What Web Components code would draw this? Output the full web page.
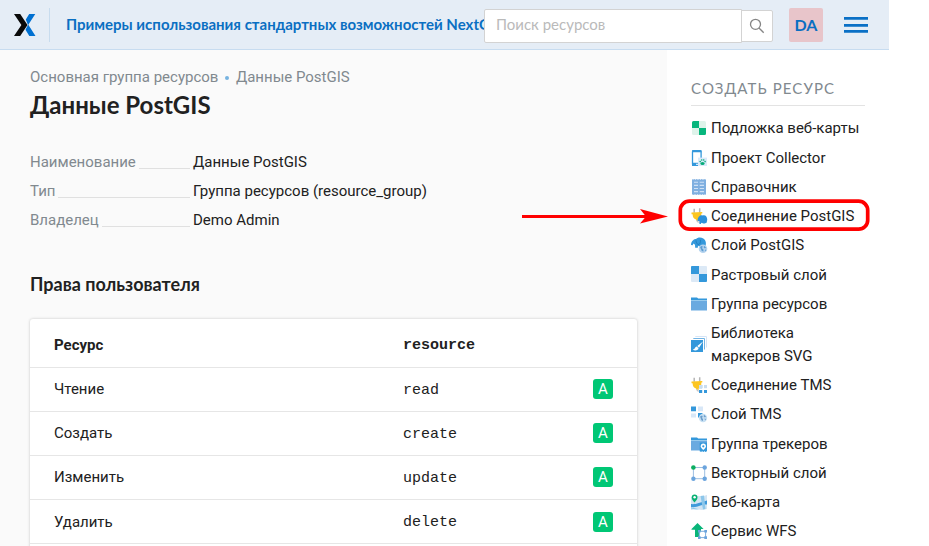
<!DOCTYPE html>
<html lang="ru">
<head>
<meta charset="utf-8">
<title>Данные PostGIS</title>
<style>
html,body{margin:0;height:546px;overflow:hidden;background:#fff}
body{font-family:Roboto,"Liberation Sans",sans-serif;font-size:15px;color:#212121}
</style>
</head>
<body>
<app-page></app-page>

<script>
const define = (name, html, setup) => customElements.define(name, class extends HTMLElement {
  constructor() {
    super();
    this.attachShadow({ mode: 'open' }).innerHTML = html;
  }
  connectedCallback() { if (setup) setup(this, this.shadowRoot); }
});

const plug = '<path d="M3.2.8v4M8.7.3v4.4" stroke="#b5b5b5" stroke-width="1.5"/><path d="M.5 4.600l10.800-.7v1.500l-1 .2c.3 2.600-.7 5-2.600 5.600l.3 1.600-2.700-.2-.3-1.200C2.700 11 1.700 9 1.600 6.300L.500 6.200z" fill="#fcc521"/><path d="M5.800 12l.6 1.800 3 .3" fill="none" stroke="#bbb" stroke-width="1.100"/>';
const elephant = '<path d="M0 8C.2 3.800 3 2 5.200 2 6.300.3 10 0 12.300 1.500c2.800 1.600 3 5 2.200 7.500l-1 2-2-.3-1-2-2.200.8-1.300-.8-.2 2H4.200L4 7.700 2.500 6.600 1.600 8.300z" fill="#3498db"/><path d="M5 3.300c.1 2.200.9 3.500 2 4.300 1.900-.1 2.700-1.900 2.400-4.800" fill="none" stroke="#1b75b5" stroke-width=".7"/>';
const icons = {
  basemap: '<rect x="1" y="1" width="14" height="14" rx="1.500" fill="#def3ea"/><path d="M2.500 1H8v7H1V2.500Q1 1 2.500 1zM8 8h7v5.500Q15 15 13.500 15H8z" fill="#07b67d"/>',
  collector: '<rect x="1.500" y=".7" width="8.600" height="14.500" rx="1" fill="#fff" stroke="#3498db" stroke-width="1.300"/><path d="M1 .2h9.500v2H1zM1 12.700h9.500V16H1z" fill="#3498db"/><path d="M5 14.300h2" stroke="#fff"/><rect x="7" y="7.600" width="9" height="8.400" fill="#dbeafa"/><ellipse cx="11.500" cy="13.400" rx="2.100" ry="1.500" fill="#08ac79"/><circle cx="9.200" cy="11.600" r=".8" fill="#08ac79"/><circle cx="10.700" cy="10" r=".8" fill="#08ac79"/><circle cx="12.700" cy="10" r=".8" fill="#08ac79"/><circle cx="14.100" cy="11.600" r=".8" fill="#08ac79"/>',
  lookup: '<path d="M1 0l1 .8L3.200 0l1.300.8L5.700 0 7 .8 8.200 0l1.300.8 1.200-.8 1.300.8 1.200-.8 1 .8.800-.8v16l-1-.8-1.200.8-1.300-.8-1.200.8-1.300-.8-1.200.8-1.300-.8-1.200.8-1.300-.8-1.200.8-1.200-.8L1 16z" fill="#7fafe0"/><path d="M3 3.300h4M3 6.400h4M3 9.500h4M3 12.600h4M8.700 3.300H13M8.700 6.400H13M8.700 9.500H13M8.700 12.600H13" stroke="#cfe1f6" stroke-width="1.100"/>',
  pgconn: plug + '<g transform="translate(6.500 6.800) scale(.65 .62)"><path d="M0 10C0 3 4 0 8 1c4-1.500 7 2 7 7l-1 5-3 1-2 0-3-1-1 2H3l0-5z" fill="#2d91db"/></g>',
  pglayer: elephant + '<circle cx="12" cy="11.700" r="4.300" fill="#b5d3ee"/><path d="M9 10l2-1.300.7 1-.7 1.600 1.300 1 .2 2.200-1.700-.6-.8-1.700zM13 8.700l2 1.800-1 1-1.300-1zM14 12.500l1.200.5-1.300 1.500z" fill="#5b9cd2"/>',
  raster: '<rect width="16" height="16" rx="1" fill="#dce9f6"/><path d="M1 0h7v8H0V1q0-1 1-1zM8 8h8v7q0 1-1 1H8z" fill="#3498db"/>',
  folder: '<path d="M0 1.500h6l1.200 1H16v2H0z" fill="#3498db"/><path d="M0 5h16v9.500H0z" fill="#6aaae0"/>',
  svg: '<path d="M4.300.5h11.200v11" fill="none" stroke="#d6e5f6" stroke-width="1"/><path d="M2.300 2.500h11.200v11" fill="none" stroke="#72b4e5"/><rect y="4" width="12" height="12" fill="#3498db"/><path d="M12 5.500L6.300 10 8 11.700zM5.800 10.500c-2 .2-1.500 2.500-4 3.200 2.300 1.500 5.800.5 5.700-1.500z" fill="#fff"/>',
  tmsconn: plug + '<path d="M8 8h3.200v3.200H8zM13 13h3v3h-3z" fill="#3498db"/><path d="M13 8h3v3.200h-3z" fill="#c8dcef"/><path d="M8 13h3.200v3H8z" fill="#3498db"/><path d="M8 8h3.200v3.200H8z" fill="#c8dcef"/>',
  tmslayer: '<path d="M0 .5h5v4.800H0zM7 7h4.500v4.500H7z" fill="#3498db"/><path d="M7 .5h5v4.800H7zM0 7.500h5v4H0z" fill="#d8e7f7"/><circle cx="12" cy="12" r="4.200" fill="#c6dff2"/><path d="M9 10.500l2-1 .7 1-.7 1.500 1 1v2l-1.600-.8-.6-1.600zM13 8.700l2 1.800-1 1-1.300-1zM13.500 12.500l1.600.5-1 1.500z" fill="#6c9dcb"/>',
  tracker: '<path d="M0 1.500h6l1.200 1H16v2H0z" fill="#3498db"/><path d="M0 5h16v9.500H0z" fill="#6aaae0"/><rect x="8.700" y="6.500" width="7.300" height="8.800" fill="#3498db"/><path d="M10 16v-1.500m2.300 1.500v-1.500M14.700 16v-1.500" stroke="#3498db"/><path d="M12.300 13.900c-1.700-1.500-2.600-2.300-2.600-3.700a2.600 2.600 0 015.200 0c0 1.400-.9 2.200-2.600 3.700z" fill="#fff"/><circle cx="12.300" cy="10.300" r="1.100" fill="#3498db"/>',
  vector: '<path d="M2.400 2.500h11.300v11.200H2.400z" fill="none" stroke="#9dbfe2"/><circle cx="2.400" cy="2.500" r="2.300" fill="#0cae61"/><circle cx="13.700" cy="2.500" r="2.200" fill="#6ba4dd"/><circle cx="2.400" cy="13.700" r="2.200" fill="#6ba4dd"/><circle cx="13.700" cy="13.700" r="2.200" fill="#6ba4dd"/>',
  webmap: '<path d="M0 3l5-1.500 6 1L16 1v14l-5 1-6-1-5 1z" fill="#d3e4f2"/><path d="M0 10c4 .7 8-1 16-3.500v4c-6-.5-9 3.500-16 2.500z" fill="#3f9adb"/><path d="M9.500 2l3.500-.5L14.500 15 12 15.500zM0 13.200l8 2-3 .3-5-1z" fill="#8cc6ea"/><path d="M3.500 8.500C1.500 6.500.7 5 .7 3.300a2.900 2.900 0 015.800 0c0 1.700-1 3.200-3 5.200z" fill="#08b173"/><circle cx="3.600" cy="3.200" r="1.200" fill="#fff"/>',
  wfs: '<path d="M6.500 0L12.600 6H10v8H4V6.800H.5V6z" fill="#09b579"/><path d="M8.300 8.300h6.300v6.300H8.300z" fill="#fff" stroke="#7daedd"/><path d="M7 7h2.600v2.600H7zM13.300 7H16v2.600h-2.700zM7 13.300h2.600V16H7zM13.300 13.300H16V16h-2.700z" fill="#6ba4dd"/>'
};

define('brand-logo', `<style>:host{display:block;width:22px;height:22px}svg{display:block}</style>
<svg width="22" height="22" viewBox="0 0 22 22"><path d="M15.200 0H21.300L14.300 10.800 21.500 22H15.300L11.500 15.800 14 11 11.800 5.500z" fill="#0070d1"/><path d="M0 0h6.200l7.300 11-7.300 11H0l7.400-11z" fill="#0a0a0a"/></svg>`);

define('search-box', `<style>
:host{display:flex;align-items:center;width:289px;height:34px}
.field{box-sizing:border-box;width:258px;height:34px;border:1px solid #d3d3d3;border-radius:2px 0 0 2px;background:#fff;padding-left:11px;font:400 15px/29px Lato,sans-serif;color:#bababa}
.go{box-sizing:border-box;width:32px;height:32px;margin-left:-1px;border:1px solid #d3d3d3;border-radius:0 2px 2px 0;background:#fff;display:grid;place-items:center}
</style><div class="field"><slot></slot></div><div class="go"><svg width="16" height="16" viewBox="0 0 16 16" fill="none" stroke="#858585" stroke-width="1.300"><circle cx="6.500" cy="6.300" r="5"/><path d="M10 10l4.700 4.700"/></svg></div>`);

define('user-badge', `<style>:host{display:block;width:34px;height:34px;border-radius:2px;background:#e8c5ca;color:#0a6fc2;font:700 16px/33px Lato,sans-serif;text-align:center}</style><slot></slot>`);

define('menu-button', `<style>:host{display:grid;width:24px;height:16px;align-content:space-between}i{display:block;height:3px;background:linear-gradient(#0a70c6 2px,#3f8fd1 2px)}</style><i></i><i></i><i></i>`);

define('app-header', `<style>
:host{display:flex;box-sizing:border-box;width:889px;height:50px;background:#e5edf6;border-bottom:1px solid #c7dcf0;align-items:center;padding-left:14px}
.sep{width:1px;height:34px;background:#c8dcee;margin:0 16px 0 13px}
.title{width:418px;height:24px;overflow:hidden;white-space:nowrap;color:#0a6fc2;font:700 15px/22px Lato,sans-serif}
user-badge{margin:0 21px 0 16px}search-box{margin-top:3px}menu-button{margin-top:1px}
</style><brand-logo></brand-logo><div class="sep"></div><div class="title"><slot></slot></div>
<search-box>Поиск ресурсов</search-box><user-badge>DA</user-badge><menu-button></menu-button>`);

define('meta-row', `<style>:host{display:flex;height:29.100px;line-height:23px;white-space:nowrap}
.k{display:flex;width:160px;margin-right:3px;color:#81898f}
.k i{flex:1;height:17px;margin-left:3px;border-bottom:1px solid #e0e0e0}
</style><div class="k"><span></span><i></i></div><div><slot></slot></div>`, (el, root) => {
  root.querySelector('span').textContent = el.getAttribute('label');
});

define('right-row', `<style>
:host{display:grid;box-sizing:border-box;grid-template-columns:349px 1fr 20px;align-items:center;height:44px;border-bottom:1px solid #e6e6e6;padding:0 24px 1px}
:host([head]){height:49px;padding-top:4px;padding-bottom:0;font-weight:700}
:host([last]){padding-bottom:0}
.code{font-family:"Liberation Mono",monospace;font-size:15px;padding-top:2px}
:host([head]) .code{padding-top:0}
.a{width:20px;height:20px;border-radius:3px;background:#00c775;color:#fff;text-align:center;font:400 15px/20px Roboto,sans-serif}
:host([head]) .a{display:none}
</style><slot></slot><span class="code"></span><span class="a">A</span>`, (el, root) => {
  root.querySelector('.code').textContent = el.getAttribute('code');
});

define('data-card', `<style>:host{display:block;width:607px;height:300px;background:#fff;border-radius:3px;box-shadow:0 0 3px rgba(0,0,0,.22)}</style><slot></slot>`);

define('resource-link', `<style>:host{display:flex;align-items:center;line-height:22.860px;padding:3.200px 0;white-space:pre-line}
svg{width:16px;height:16px;flex:none;margin:-1px 4px 0 0;overflow:visible}</style><svg viewBox="0 0 16 16"></svg><span><slot></slot></span>`, (el, root) => {
  root.querySelector('svg').innerHTML = icons[el.getAttribute('icon')];
});

define('create-panel', `<style>
:host{display:block;width:174px;padding:26px 0 0 24px;background:#fff}
h3{margin:0 0 8.200px;height:29px;border-bottom:1px solid #e3e3e3;font:400 15px/25px Lato,sans-serif;letter-spacing:1.100px;color:#81898f;white-space:nowrap}
</style><h3>СОЗДАТЬ РЕСУРС</h3><slot></slot>`);

define('callout-mark', `<style>:host{position:absolute;left:520px;top:198px;width:352px;height:36px}svg{display:block}</style>
<svg width="352" height="36"><path d="M2 18.500h125" stroke="#f00" stroke-width="3"/><path d="M148 18.500l-28-7.500 6 7.500-6 7z" fill="#f00"/><rect x="160.300" y="3.200" width="187.400" height="28" rx="9" fill="none" stroke="#f00" stroke-width="3.700"/></svg>`);

define('app-page', `<style>
:host{display:block;position:relative;width:929px;height:546px;overflow:hidden}
.body{display:flex;height:496px}
main{box-sizing:border-box;width:667px;padding:16px 30px 0;background:#fafafa}
.crumbs{display:flex;align-items:center;line-height:23px;color:#81898f;white-space:nowrap}
.crumbs i{width:4px;height:4px;border-radius:50%;background:#77b3e0;margin:0 7px 0 6.500px}
h1{margin:0 0 32px;font:700 24px/32px Lato,sans-serif;height:30px;line-height:31px}
h2{margin:34px 0 23px;font:700 18px/24px Lato,sans-serif}
</style>
<app-header>Примеры использования стандартных возможностей NextG</app-header>
<div class="body"><main>
<div class="crumbs"><span>Основная группа ресурсов</span><i></i><span>Данные PostGIS</span></div>
<h1>Данные PostGIS</h1>
<meta-row label="Наименование">Данные PostGIS</meta-row>
<meta-row label="Тип">Группа ресурсов (resource_group)</meta-row>
<meta-row label="Владелец">Demo Admin</meta-row>
<h2>Права пользователя</h2>
<data-card>
<right-row head code="resource">Ресурс</right-row>
<right-row code="read">Чтение</right-row>
<right-row code="create">Создать</right-row>
<right-row code="update">Изменить</right-row>
<right-row last code="delete">Удалить</right-row>
</data-card>
</main>
<create-panel>
<resource-link icon="basemap">Подложка веб-карты</resource-link>
<resource-link icon="collector">Проект Collector</resource-link>
<resource-link icon="lookup">Справочник</resource-link>
<resource-link icon="pgconn">Соединение PostGIS</resource-link>
<resource-link icon="pglayer">Слой PostGIS</resource-link>
<resource-link icon="raster">Растровый слой</resource-link>
<resource-link icon="folder">Группа ресурсов</resource-link>
<resource-link icon="svg">Библиотека
маркеров SVG</resource-link>
<resource-link icon="tmsconn">Соединение TMS</resource-link>
<resource-link icon="tmslayer">Слой TMS</resource-link>
<resource-link icon="tracker">Группа трекеров</resource-link>
<resource-link icon="vector">Векторный слой</resource-link>
<resource-link icon="webmap">Веб-карта</resource-link>
<resource-link icon="wfs">Сервис WFS</resource-link>
</create-panel></div>
<callout-mark></callout-mark>`);
</script>
</body>
</html>
